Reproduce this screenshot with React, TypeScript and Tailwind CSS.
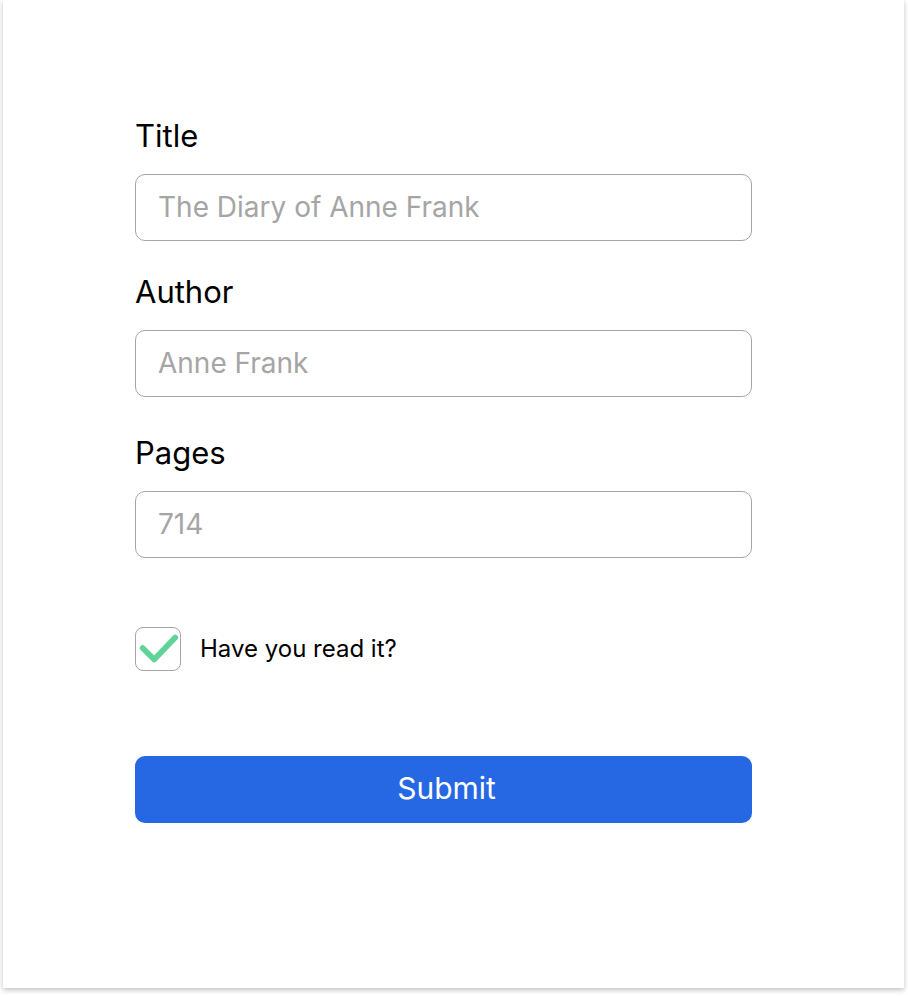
import React from 'react';

const font = { fontFamily: 'Inter, "Liberation Sans", sans-serif' };

interface FieldProps {
  label: string;
  placeholder: string;
  className?: string;
}

const Field: React.FC<FieldProps> = ({ label, placeholder, className = '' }) => (
  <div className={`flex flex-col ${className}`}>
    <label className="text-[31px] leading-[32px] text-black">{label}</label>
    <input
      className="mt-[22px] h-[67px] w-full rounded-[10px] border border-[#a6a6a6] bg-white px-[22px] pb-[2px] text-[28px] text-black placeholder:text-[#a5a5a5] outline-none"
      placeholder={placeholder}
    />
  </div>
);

export default function App() {
  return (
    <div className="h-[996px] w-[908px] bg-white" style={font}>
      <div className="ml-[3px] h-[988px] w-[901px] bg-white shadow-[0_2px_5px_rgba(0,0,0,0.25)]">
        <form className="ml-[132px] flex w-[617px] flex-col pt-[120px]">
          <Field label="Title" placeholder="The Diary of Anne Frank" />
          <Field label="Author" placeholder="Anne Frank" className="mt-[35px]" />
          <Field label="Pages" placeholder="714" className="mt-[40px]" />

          <div className="mt-[69px] flex items-center gap-[19px]">
            <div className="flex h-[44px] w-[46px] items-center justify-center rounded-[8px] border border-[#a6a6a6] bg-white">
              <svg width="46" height="44" viewBox="0 0 46 44">
                <path
                  d="M7 21 L19 33 L41 10"
                  fill="none"
                  stroke="#5fd39a"
                  strokeWidth="6"
                  strokeLinecap="round"
                  strokeLinejoin="round"
                />
              </svg>
            </div>
            <span className="text-[24px] text-black">Have you read it?</span>
          </div>

          <button
            type="button"
            className="mt-[85px] h-[67px] w-full rounded-[10px] bg-[#2667e3] pb-[3px] pl-[6px] text-[30px] text-white"
          >
            Submit
          </button>
        </form>
      </div>
    </div>
  );
}
